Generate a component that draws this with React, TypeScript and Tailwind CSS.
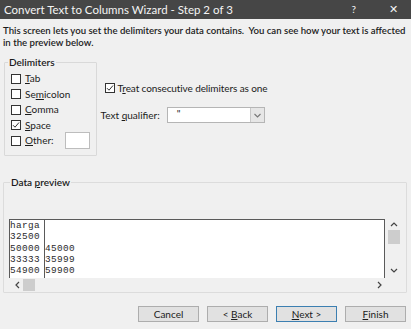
import type { ReactNode } from 'react';

// Small Windows-style checkbox
const Check = ({ checked }: { checked?: boolean }) => (
  <span className="w-[10px] h-[10px] border border-[#333] bg-white flex items-center justify-center shrink-0">
    {checked && (
      <svg width="8" height="8" viewBox="0 0 8 8">
        <path d="M1 4.2 L3 6.2 L7 1.5" fill="none" stroke="#333" strokeWidth="1" />
      </svg>
    )}
  </span>
);

// Label with an underlined access key
const Key = ({ pre = '', k, post = '' }: { pre?: string; k: string; post?: string }) => (
  <span>
    {pre}
    <span className="underline underline-offset-1">{k}</span>
    {post}
  </span>
);

const Button = ({ children, primary }: { children: ReactNode; primary?: boolean }) => (
  <button
    className={
      primary
        ? 'w-[61px] h-[16px] border border-[#3c7fb1] bg-[#e1e1e1] text-[10px] leading-none flex items-center justify-center'
        : 'w-[61px] h-[16px] border border-[#adadad] bg-[#e1e1e1] text-[10px] leading-none flex items-center justify-center'
    }
  >
    {children}
  </button>
);

const rows = [
  ['harga', ''],
  ['32500', ''],
  ['50000', '45000'],
  ['33333', '35999'],
  ['54900', '59900'],
];

export default function App() {
  return (
    <div className="w-[411px] h-[329px] bg-[#f0f0f0] text-[#1b1b1b] font-['Lato',sans-serif] flex flex-col overflow-hidden">
      {/* title bar */}
      <div className="h-[19px] bg-[#464646] text-[#f4f4f4] flex items-center pl-[4px] text-[11.5px]">
        <span>Convert Text to Columns Wizard - Step 2 of 3</span>
        <span className="ml-auto mr-[33px] text-[10px]">?</span>
        <span className="mr-[13px] text-[11px]">✕</span>
      </div>

      {/* description */}
      <div className="px-[3px] mt-[6px] text-[9.6px] leading-[12px] font-semibold whitespace-pre">
        {'This screen lets you set the delimiters your data contains.  You can see how your text is affected\nin the preview below.'}
      </div>

      {/* options row */}
      <div className="flex mt-[7px] text-[10px]">
        <fieldset className="ml-[4px] w-[89px] h-[100px] border border-[#d9d9d9] rounded-[1px] px-[6px]">
          <legend className="px-[1px] -ml-[3px] leading-[12px] font-semibold">Delimiters</legend>
          <div className="flex flex-col mt-[3px]">
            <label className="h-[15.5px] flex items-center gap-[4px]"><Check /><Key k="T" post="ab" /></label>
            <label className="h-[15.5px] flex items-center gap-[4px]"><Check /><Key pre="Se" k="m" post="icolon" /></label>
            <label className="h-[15.5px] flex items-center gap-[4px]"><Check /><Key k="C" post="omma" /></label>
            <label className="h-[15.5px] flex items-center gap-[4px]"><Check checked /><Key k="S" post="pace" /></label>
            <label className="h-[15.5px] flex items-center gap-[4px]">
              <Check />
              <Key k="O" post="ther:" />
              <span className="ml-[7px] w-[25px] h-[17px] bg-white border border-[#bdbdbd]" />
            </label>
          </div>
        </fieldset>

        <div className="ml-[8px] flex flex-col pt-[26px]">
          <label className="flex items-center gap-[3px] h-[12px]">
            <Check checked />
            <span className="tracking-[-0.1px]"><Key pre="T" k="r" post="eat consecutive delimiters as one" /></span>
          </label>
          <div className="flex items-center mt-[13px] -ml-[4px]">
            <Key pre="Text " k="q" post="ualifier:" />
            <div className="ml-[7px] w-[98px] h-[16px] bg-white border border-[#b5b5b5] flex">
              <span className="flex-1 pl-[9px] leading-[10px]">"</span>
              <span className="w-[14px] bg-[#e6e6e6] border-l border-[#c8c8c8] flex items-center justify-center">
                <svg width="7" height="5" viewBox="0 0 7 5">
                  <path d="M0.5 1 L3.5 4 L6.5 1" fill="none" stroke="#777" strokeWidth="1.1" />
                </svg>
              </span>
            </div>
          </div>
        </div>
      </div>

      {/* data preview */}
      <fieldset className="ml-[3px] mt-[20px] w-[403px] h-[117px] border border-[#dcdcdc] rounded-[1px] px-[5px]">
        <legend className="text-[10px] leading-[12px] px-[1px] ml-[1px] font-semibold">
          Data <span className="underline underline-offset-1">p</span>review
        </legend>
        <div className="mt-[31px] flex">
          <div className="w-[376px] h-[59px] bg-white border-t border-l border-r border-[#5a5a5a] flex font-['Liberation_Mono',monospace] text-[9.4px] tracking-[0.4px] text-[#2a2a2a]">
            <div className="w-[35px] border-r border-[#5a5a5a]">
              {rows.map((r, i) => (
                <div key={i} className="h-[11.3px] leading-[11.3px]">{r[0]}</div>
              ))}
            </div>
            <div>
              {rows.map((r, i) => (
                <div key={i} className="h-[11.3px] leading-[11.3px]">{r[1] || '\u00a0'}</div>
              ))}
            </div>
          </div>
          <div className="w-[14px] ml-[2px] h-[59px] flex flex-col items-center">
            <svg width="8" height="6" viewBox="0 0 8 6" className="mt-[2px]">
              <path d="M1 5 L4 2 L7 5" fill="none" stroke="#444" strokeWidth="1.2" />
            </svg>
            <span className="mt-[3px] w-[12px] h-[14px] bg-[#cdcdcd]" />
            <svg width="8" height="6" viewBox="0 0 8 6" className="mt-auto mb-[4px]">
              <path d="M1 1 L4 4 L7 1" fill="none" stroke="#444" strokeWidth="1.2" />
            </svg>
          </div>
        </div>
        <div className="h-[14px] w-[376px] flex items-center">
          <svg width="6" height="8" viewBox="0 0 6 8" className="ml-[5px]">
            <path d="M5 1 L2 4 L5 7" fill="none" stroke="#444" strokeWidth="1.2" />
          </svg>
          <span className="ml-[3px] w-[12px] h-[12px] bg-[#cdcdcd]" />
          <svg width="6" height="8" viewBox="0 0 6 8" className="ml-auto mr-[2px]">
            <path d="M1 1 L4 4 L1 7" fill="none" stroke="#444" strokeWidth="1.2" />
          </svg>
        </div>
      </fieldset>

      {/* buttons */}
      <div className="flex justify-end gap-[8px] pr-[5px] mt-[13px]">
        <Button>Cancel</Button>
        <Button><Key pre="< " k="B" post="ack" /></Button>
        <Button primary><Key k="N" post="ext >" /></Button>
        <Button><Key k="F" post="inish" /></Button>
      </div>
    </div>
  );
}
